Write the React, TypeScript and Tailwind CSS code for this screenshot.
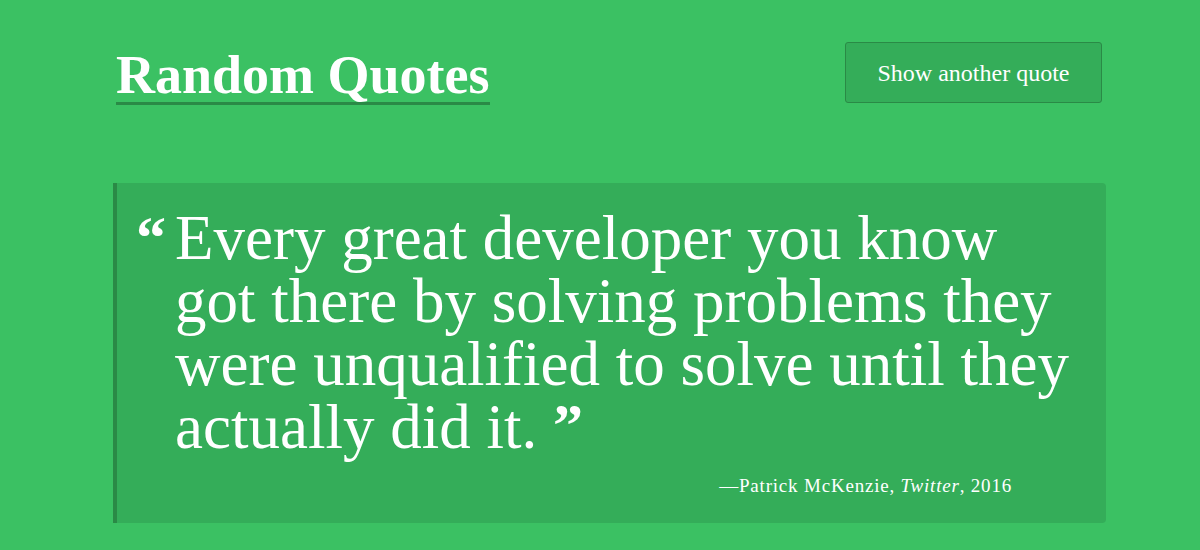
import React from 'react';

const quote = {
  text: 'Every great developer you know got there by solving problems they were unqualified to solve until they actually did it.',
  author: 'Patrick McKenzie',
  source: 'Twitter',
  year: '2016',
};

const serif = "font-['Liberation_Serif',serif]";

export default function App() {
  return (
    <div className={`min-h-[550px] w-full bg-[#3bc163] text-white ${serif}`}>
      <div className="ml-[113px] w-[993px] pt-[42px] pb-[27px]">
        {/* Header */}
        <header className="flex items-start justify-between pl-[3px] pr-[4px]">
          <h1 className="mt-[6px] border-b-[3px] border-[#2a8a46] text-[54px] font-bold leading-[54px]">
            Random Quotes
          </h1>
          <button className="flex h-[61px] w-[257px] items-center justify-center rounded-[3px] border border-[#2a8a46] bg-[#34ad59] text-[24px] text-white">
            Show another quote
          </button>
        </header>

        {/* Quote card */}
        <blockquote className="mt-[78px] rounded-r-[4px] border-l-4 border-[#2a8a46] bg-[#34ad59] pt-[24px] pb-[24px] pl-[19px] pr-[25px]">
          <div className="flex items-start">
            <span className="w-[39px] shrink-0 text-[60px] font-bold leading-[63px]">“</span>
            <p className="w-[906px] text-[63px] leading-[63px]">
              {quote.text}{' '}
              <span className="align-[3px] text-[60px] font-bold leading-[0]">”</span>
            </p>
          </div>
          <footer className="mt-[13px] pr-[69px] text-right text-[19px] leading-[27px] tracking-[0.8px]">
            —{quote.author}, <cite className="italic">{quote.source}</cite>, {quote.year}
          </footer>
        </blockquote>
      </div>
    </div>
  );
}
